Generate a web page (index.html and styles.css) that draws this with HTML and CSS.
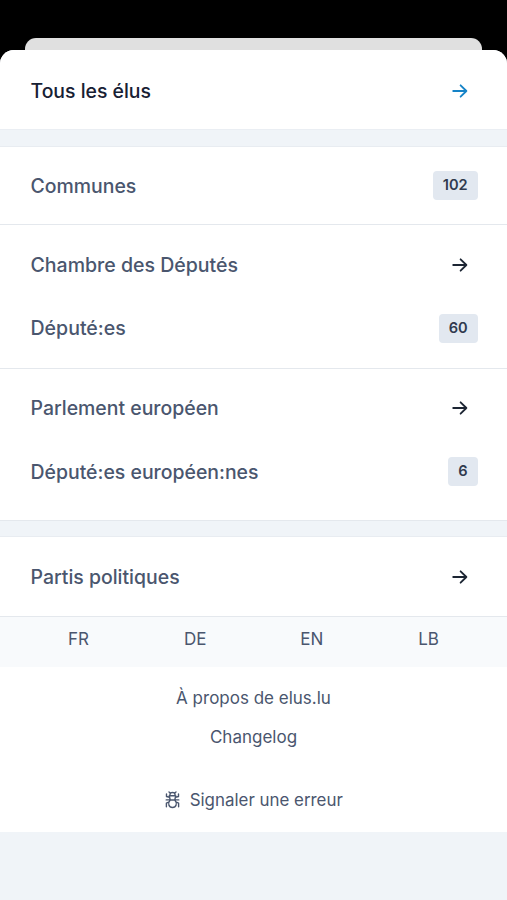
FILE: index.html
```html
<!DOCTYPE html>
<html lang="fr">
<head>
<meta charset="utf-8">
<title>elus.lu</title>
<link rel="stylesheet" href="styles.css">
</head>
<body>
<svg class="defs" width="0" height="0" aria-hidden="true">
  <symbol id="arrow" viewBox="0 0 16 16"><path d="M1.2 8h13.2M8.6 2.3 14.4 8l-5.8 5.7"/></symbol>
</svg>
<div class="back-sheet"></div>
<main class="sheet">
  <nav>
    <section class="group all">
      <a class="row strong"><span>Tous les élus</span><svg class="arrow blue"><use href="#arrow"/></svg></a>
    </section>
    <div class="gap"></div>
    <section class="group towns">
      <a class="row"><span>Communes</span><span class="badge">102</span></a>
    </section>
    <section class="group chamber">
      <a class="row"><span>Chambre des Députés</span><svg class="arrow"><use href="#arrow"/></svg></a>
      <a class="row"><span>Député:es</span><span class="badge">60</span></a>
    </section>
    <section class="group europe">
      <a class="row"><span>Parlement européen</span><svg class="arrow"><use href="#arrow"/></svg></a>
      <a class="row"><span>Député:es européen:nes</span><span class="badge">6</span></a>
    </section>
    <div class="gap second"></div>
    <section class="group parties">
      <a class="row"><span>Partis politiques</span><svg class="arrow"><use href="#arrow"/></svg></a>
    </section>
  </nav>
  <div class="languages"><a>FR</a><a>DE</a><a>EN</a><a>LB</a></div>
  <footer class="links">
    <a class="link about">À propos de elus.lu</a>
    <a class="link changelog">Changelog</a>
    <a class="link report">
      <svg class="bug" viewBox="0 0 15 18">
        <path d="M5 4.500V3.200q0-1.700 2.500-1.700T10 3.200v1.300M4.300 4.800h6.400l-.9 4.200H5.200zM5.200 9C2.300 12.300 3.800 16.500 7.500 16.500S12.700 12.300 9.800 9zM4.500 6.300 1.500 5.500V3M10.500 6.300l3-.8V3M4.800 8.900H1.200M10.200 8.900h3.600M3.700 11.200 1.400 12.200v3.600M11.300 11.200l2.300 1v3.600M5.300 2 4 1M9.700 2 11 1"/>
      </svg>
      <span>Signaler une erreur</span>
    </a>
  </footer>
</main>
</body>
</html>
```

FILE: styles.css
```css
* { box-sizing: border-box; }
body {
  margin: 0;
  height: 900px;
  padding-top: 38px;
  overflow: hidden;
  background: #000;
  color: #4a566e;
  font-family: Inter, "Liberation Sans", sans-serif;
}
.defs { position: absolute; }
.back-sheet {
  height: 12px;
  margin: 0 25px;
  border-radius: 11px 11px 0 0;
  background: #e0e0e0;
}
.sheet {
  height: 850px;
  overflow: hidden;
  border-radius: 14px 14px 0 0;
  background: #f0f4f8;
}
.group {
  display: flex;
  flex-direction: column;
  background: #fff;
  border-bottom: 1px solid #e4e8ed;
}
.all { height: 80px; padding-top: 9px; border-bottom-color: #eaeef3; }
.gap { height: 17px; border-bottom: 1px solid #e8ecf1; }
.towns { height: 78px; padding-top: 7px; }
.chamber { height: 144px; padding-top: 8.700px; }
.europe { height: 152px; padding-top: 7.500px; }
.second { height: 16px; }
.parties { height: 80px; padding-top: 8px; }
.row {
  display: flex;
  flex: none;
  align-items: center;
  justify-content: space-between;
  height: 63.400px;
  padding: 0 29.500px 0 30.500px;
  font-size: 19.450px;
  font-weight: 500;
}
.chamber .row { height: 63px; font-size: 19.550px; }
.strong { color: #172033; font-size: 19.400px; }
.arrow {
  width: 16px;
  height: 16px;
  margin-right: 9.500px;
  fill: none;
  stroke: #1c2533;
  stroke-width: 1.800;
  stroke-linecap: round;
  stroke-linejoin: round;
}
.blue { stroke: #1583c7; }
.badge {
  height: 29px;
  padding: 0 9.900px;
  border-radius: 4px;
  background: #e2e8f0;
  color: #303a4e;
  font-size: 14.600px;
  font-weight: 600;
  line-height: 29px;
}
.languages {
  display: grid;
  grid-template-columns: repeat(4, 1fr);
  height: 50px;
  padding: 0 20px;
  background: #f8fafc;
  font-size: 17px;
  line-height: 45px;
  text-align: center;
}
.links {
  display: flex;
  flex-direction: column;
  align-items: center;
  height: 165px;
  padding-top: 12px;
  background: #fff;
  font-size: 17px;
}
.link { height: 39px; line-height: 39px; }
.report {
  display: flex;
  align-items: center;
  gap: 9.500px;
  margin-top: 24px;
  padding-left: 1px;
  font-size: 16.900px;
}
.bug {
  width: 15px;
  height: 18px;
  margin-bottom: 1px;
  fill: none;
  stroke: currentColor;
  stroke-width: 1.400;
  stroke-linecap: round;
  stroke-linejoin: round;
}
```
